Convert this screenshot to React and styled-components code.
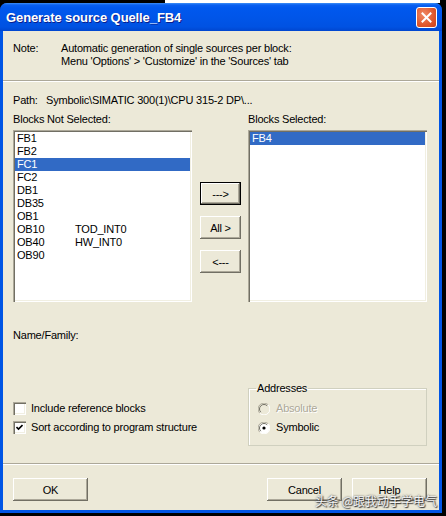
import React from 'react'
import styled, { createGlobalStyle } from 'styled-components'

const GlobalStyle = createGlobalStyle`
  html, body {
    margin: 0;
    padding: 0;
    background: #000;
  }
  body {
    font-family: "Liberation Sans", Arial, sans-serif;
    font-size: 11px;
    color: #000;
  }
`;

const Screen = styled.div`
  position: relative;
  width: 446px;
  height: 516px;
  padding-top: 3px;
  box-sizing: border-box;
  background:
    linear-gradient(to right, #000 165px, #fff 165px, #fff 440px, #000 440px) top / 100% 3px no-repeat,
    #000;
`;

const Window = styled.div`
  width: 442px;
  height: 510px;
  display: flex;
  flex-direction: column;
  background: #0055e5;
  border-radius: 7px 7px 0 0;
  box-sizing: border-box;
`;

const TitleBar = styled.div`
  height: 28px;
  flex: none;
  display: flex;
  align-items: center;
  justify-content: space-between;
  padding: 0 5px 0 6px;
  border-radius: 7px 7px 0 0;
  background: linear-gradient(#3d8ff7 0, #0a5ff0 2px, #0058ee 5px, #0055e8 55%, #0052e2 85%, #0046cf 100%);
`;

const Title = styled.div`
  font-family: "Liberation Sans", Arial, sans-serif;
  font-weight: bold;
  font-size: 13px;
  color: #fff;
  text-shadow: 1px 1px #0a1e8c;
  letter-spacing: -0.1px;
`;

const CloseButton = styled.div`
  width: 21px;
  height: 21px;
  box-sizing: border-box;
  border: 1px solid #fff;
  border-radius: 3px;
  background: radial-gradient(circle at 35% 35%, #f08a66, #e0572c 60%, #c8401b);
  display: flex;
  align-items: center;
  justify-content: center;
`;

const Body = styled.div`
  flex: 1;
  margin: 0 3px 3px;
  background: #ece9d8;
  display: flex;
  flex-direction: column;
`;

const NoteSection = styled.div`
  display: grid;
  grid-template-columns: 48px auto;
  padding: 11px 10px 0;
  line-height: 13px;
  letter-spacing: -0.2px;
`;

const Separator = styled.div`
  height: 0;
  border-top: 1px solid #aca899;
  border-bottom: 1px solid #fff;
  margin-top: ${p => p.$top}px;
`;

const Main = styled.div`
  padding: 12px 12px 0 10px;
  display: flex;
  flex-direction: column;
  line-height: 13px;
  letter-spacing: -0.2px;
`;

const PathRow = styled.div`
  display: grid;
  grid-template-columns: 33px auto;
`;

const ListsGrid = styled.div`
  display: grid;
  grid-template-columns: 179px 56px 179px;
  margin-top: ${p => p.$top || 0}px;
`;

const ListBox = styled.div`
  height: 172px;
  background: #fff;
  box-sizing: border-box;
  padding: 2px;
  box-shadow: inset 1px 1px #aca899, inset 2px 2px #716f64, inset -1px -1px #fff, inset -2px -2px #f1efe2;
`;

const ListItem = styled.div`
  display: grid;
  grid-template-columns: 58px auto;
  height: 13px;
  line-height: 13px;
  padding-left: 2px;
  background: ${p => (p.$selected ? '#316ac5' : 'transparent')};
  color: ${p => (p.$selected ? '#fff' : '#000')};
`;

const MoveButtons = styled.div`
  display: flex;
  flex-direction: column;
  gap: 11px;
  padding: 52px 0 0 8px;
`;

const Button = styled.button`
  width: ${p => p.$w || 75}px;
  height: 23px;
  padding: 0;
  border: none;
  font-family: "Liberation Sans", Arial, sans-serif;
  font-size: 11px;
  letter-spacing: -0.2px;
  color: #000;
  background: #ece9d8;
  box-shadow: ${p =>
    p.$default
      ? 'inset 0 0 0 1px #000, inset -2px -2px #716f64, inset 2px 2px #fff, inset -3px -3px #aca899'
      : 'inset -1px -1px #716f64, inset 1px 1px #fff, inset -2px -2px #aca899'};
`;

const NameFamily = styled.div`
  margin-top: 27px;
`;

const Options = styled.div`
  display: grid;
  grid-template-columns: 1fr 179px;
  margin-top: 40px;
`;

const CheckColumn = styled.div`
  align-self: end;
  padding-bottom: 9px;
`;

const OptionRow = styled.div`
  height: 19px;
  display: flex;
  align-items: center;
  gap: ${p => p.$gap || 5}px;
  color: ${p => (p.$disabled ? '#aca899' : '#000')};
  text-shadow: ${p => (p.$disabled ? '1px 1px #fff' : 'none')};
`;

const CheckBox = styled.div`
  width: 13px;
  height: 13px;
  box-sizing: border-box;
  background: #fff;
  box-shadow: inset 1px 1px #aca899, inset 2px 2px #716f64, inset -1px -1px #fff, inset -2px -2px #f1efe2;
  display: flex;
  align-items: center;
  justify-content: center;
`;

const GroupBox = styled.fieldset`
  margin: 0;
  padding: 4px 0 8px 9px;
  border: 1px solid #d0d0bf;
  box-shadow: inset 1px 1px #fff;
  border-radius: 0;
`;

const Legend = styled.legend`
  padding: 0 1px;
  margin-left: -2px;
  line-height: 13px;
`;

const ButtonBar = styled.div`
  display: flex;
  justify-content: space-between;
  padding: 13px 12px 0 10px;
`;

const ButtonGroup = styled.div`
  display: flex;
  gap: 10px;
`;

const Watermark = styled.div`
  position: absolute;
  right: 9px;
  bottom: 8px;
  font-family: "Noto Sans CJK SC", sans-serif;
  font-size: 12px;
  line-height: 14px;
  color: #f4f4f4;
  text-shadow: 0 0 2px #333, 1px 1px 1px #333;
`;

const notSelected = [
  ['FB1'], ['FB2'], ['FC1'], ['FC2'], ['DB1'], ['DB35'], ['OB1'],
  ['OB10', 'TOD_INT0'], ['OB40', 'HW_INT0'], ['OB90'],
];

function Radio({ checked, disabled }) {
  return (
    <svg width="12" height="12" viewBox="0 0 12 12">
      <circle cx="6" cy="6" r="5.5" fill={disabled ? '#ece9d8' : '#fff'} />
      <path d="M1.8 10.2 A5.5 5.5 0 0 1 10.2 1.8" stroke="#aca899" fill="none" />
      <path d="M2.8 9.2 A4.3 4.3 0 0 1 9.2 2.8" stroke="#716f64" fill="none" />
      <path d="M10.2 1.8 A5.5 5.5 0 0 1 1.8 10.2" stroke="#fff" fill="none" />
      {checked && <circle cx="6" cy="6" r="1.6" fill="#000" />}
    </svg>
  );
}

export default function App() {
  return (
    <Screen>
      <GlobalStyle />
      <Window>
        <TitleBar>
          <Title>Generate source Quelle_FB4</Title>
          <CloseButton>
            <svg width="11" height="11" viewBox="0 0 11 11">
              <path d="M1.5 1.5 L9.5 9.5 M9.5 1.5 L1.5 9.5" stroke="#fff" strokeWidth="2" strokeLinecap="square" />
            </svg>
          </CloseButton>
        </TitleBar>
        <Body>
          <NoteSection>
            <div>Note:</div>
            <div>
              Automatic generation of single sources per block:<br />
              Menu 'Options' &gt; 'Customize' in the 'Sources' tab
            </div>
          </NoteSection>
          <Separator $top={12} />
          <Main>
            <PathRow>
              <div>Path:</div>
              <div>Symbolic\SIMATIC 300(1)\CPU 315-2 DP\...</div>
            </PathRow>
            <ListsGrid $top={6}>
              <div>Blocks Not Selected:</div>
              <div />
              <div>Blocks Selected:</div>
            </ListsGrid>
            <ListsGrid $top={4}>
              <ListBox>
                {notSelected.map(([name, sym]) => (
                  <ListItem key={name} $selected={name === 'FC1'}>
                    <span>{name}</span>
                    <span>{sym}</span>
                  </ListItem>
                ))}
              </ListBox>
              <MoveButtons>
                <Button $w={41} $default>---&gt;</Button>
                <Button $w={41}>All &gt;</Button>
                <Button $w={41}>&lt;---</Button>
              </MoveButtons>
              <ListBox>
                <ListItem $selected>
                  <span>FB4</span>
                </ListItem>
              </ListBox>
            </ListsGrid>
            <NameFamily>Name/Family:</NameFamily>
            <Options>
              <CheckColumn>
                <OptionRow>
                  <CheckBox />
                  <span>Include reference blocks</span>
                </OptionRow>
                <OptionRow>
                  <CheckBox>
                    <svg width="7" height="7" viewBox="0 0 7 7">
                      <path d="M0.5 3 L2.5 5 L6.5 1" stroke="#000" strokeWidth="1.6" fill="none" />
                    </svg>
                  </CheckBox>
                  <span>Sort according to program structure</span>
                </OptionRow>
              </CheckColumn>
              <GroupBox>
                <Legend>Addresses</Legend>
                <OptionRow $disabled $gap={6}>
                  <Radio disabled />
                  <span>Absolute</span>
                </OptionRow>
                <OptionRow $gap={6}>
                  <Radio checked />
                  <span>Symbolic</span>
                </OptionRow>
              </GroupBox>
            </Options>
          </Main>
          <Separator $top={17} />
          <ButtonBar>
            <Button>OK</Button>
            <ButtonGroup>
              <Button>Cancel</Button>
              <Button>Help</Button>
            </ButtonGroup>
          </ButtonBar>
        </Body>
      </Window>
      <Watermark>头条 @跟我动手学电气</Watermark>
    </Screen>
  );
}
